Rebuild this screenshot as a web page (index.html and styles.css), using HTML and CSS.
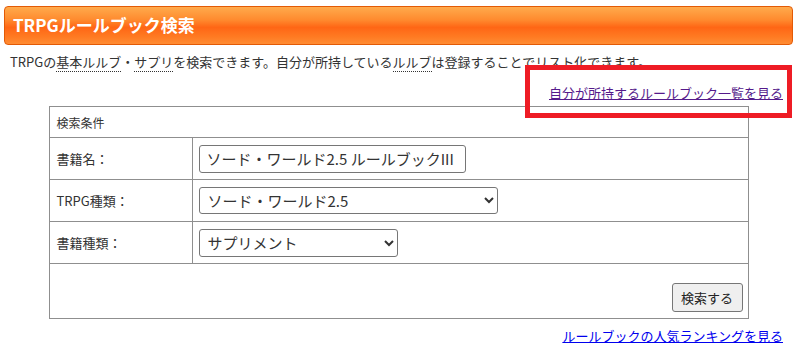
FILE: index.html
```html
<!DOCTYPE html>
<html lang="ja">

<head>
    <meta charset="UTF-8">
    <meta name="viewport" content="width=device-width, initial-scale=1.0">
    <title>TRPGルールブック検索</title>
    <link rel="stylesheet" href="styles.css">
</head>

<body>
    <div class="page">
        <h1 class="title">TRPGルールブック検索</h1>
        <p class="intro">TRPGの<abbr title="基本ルールブック">基本ルルブ</abbr>・<abbr title="サプリメント">サプリ</abbr>を検索できます。自分が所持している<abbr title="ルールブック">ルルブ</abbr>は登録することでリスト化できます。</p>

        <div class="link-row my-row">
            <a href="#" class="visited">自分が所持するルールブック一覧を見る</a>
            <span class="mark"></span>
        </div>

        <table class="search">
            <tr>
                <th colspan="2" class="caption">検索条件</th>
            </tr>
            <tr>
                <th>書籍名：</th>
                <td><input type="text" class="name-input" value="ソード・ワールド2.5 ルールブックIII"></td>
            </tr>
            <tr>
                <th>TRPG種類：</th>
                <td>
                    <select class="sel-system">
                        <option>ソード・ワールド2.5</option>
                    </select>
                </td>
            </tr>
            <tr>
                <th>書籍種類：</th>
                <td>
                    <select class="sel-type">
                        <option>サプリメント</option>
                    </select>
                </td>
            </tr>
            <tr>
                <td colspan="2" class="actions"><button>検索する</button></td>
            </tr>
        </table>

        <div class="link-row bottom-row">
            <a href="#">ルールブックの人気ランキングを見る</a>
        </div>
    </div>
</body>

</html>
```

FILE: styles.css
```css
body {
    margin: 0;
    font-family: "Noto Sans CJK JP", "Noto Sans", sans-serif;
    color: #333;
    background-color: #fff;
}

.page {
    position: relative;
    padding: 6px 5px 0 4px;
}

.title {
    margin: 0;
    height: 37px;
    line-height: 36px;
    padding-left: 8px;
    font-size: 17px;
    font-weight: bold;
    color: #fff;
    border: 1px solid #e35a06;
    border-radius: 4px;
    background: linear-gradient(#ffaa4c 0%, #ff8a2e 35%, #ff6615 55%, #ff7a22 80%, #ff8c33 100%);
}

.intro {
    margin: 7px 0 0 6px;
    font-size: 13px;
    line-height: 20px;
}

abbr {
    text-decoration: none;
    border-bottom: 1px dotted #333;
}

.link-row {
    text-align: right;
    padding-right: 10px;
    font-size: 13px;
    line-height: 20px;
}

.my-row {
    margin-top: 11px;
}

a {
    color: #0000ee;
}

a.visited {
    color: #551a8b;
}

/* 注目マーク（赤枠） */
.mark {
    position: absolute;
    left: 525px;
    top: 65px;
    width: 257px;
    height: 43px;
    border: 5px solid #ee1c25;
}

.search {
    margin: 3px auto 0;
    width: 700px;
    border-collapse: collapse;
    font-size: 13px;
}

.search th,
.search td {
    border: 1px solid #8f8f8f;
    text-align: left;
    font-weight: normal;
}

.search th {
    width: 128px;
    padding: 0 7px;
    height: 41px;
}

.search th.caption {
    height: 30px;
    font-size: 12px;
}

.search td {
    padding: 0 6px;
}

input,
select {
    font-family: "Noto Sans CJK JP", "Noto Sans", sans-serif;
    font-size: 15px;
    color: #333;
    box-sizing: border-box;
    border: 1px solid #767676;
    border-radius: 3px;
    background-color: #fff;
    display: block;
}

.name-input {
    width: 267px;
    height: 28px;
    padding: 0 7px;
}

.sel-system {
    width: 299px;
    height: 27px;
    padding: 0 4px;
}

.sel-type {
    width: 199px;
    height: 28px;
    padding: 0 4px;
}

.search td.actions {
    height: 48px;
    text-align: right;
    vertical-align: bottom;
    padding: 0 5px 6px 0;
}

button {
    font-family: "Noto Sans CJK JP", "Noto Sans", sans-serif;
    font-size: 13px;
    width: 71px;
    height: 29px;
    color: #222;
    background-color: #efefef;
    border: 1px solid #767676;
    border-radius: 3px;
}

.bottom-row {
    margin-top: 7px;
}
```
